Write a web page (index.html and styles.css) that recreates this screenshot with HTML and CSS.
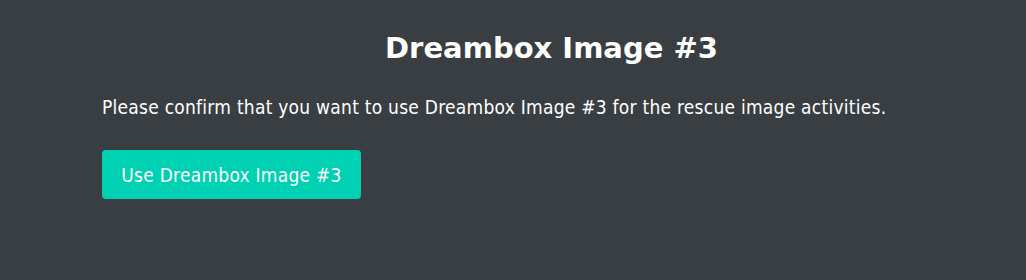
FILE: index.html
```html
<!DOCTYPE html>
<html lang="en">
<head>
  <meta charset="UTF-8">
  <meta name="viewport" content="width=device-width, initial-scale=1.0">
  <title>Dreambox Image #3</title>
  <link rel="stylesheet" href="styles.css">
</head>
<body>
  <div class="container">
    <h1 class="title">Dreambox Image #3</h1>
    <p class="message">Please confirm that you want to use Dreambox Image #3 for the rescue image activities.</p>
    <button class="button" id="useImage">Use Dreambox Image #3</button>
  </div>
</body>
</html>
```

FILE: styles.css
```css
body {
  font-family: "DejaVu Sans Condensed", "DejaVu Sans", sans-serif;
  margin: 0;
  min-height: 100vh;
  background-color: #393e42;
  color: #fff;
}

.container {
  padding: 30px 25px 0 102px;
}

.title {
  font-family: "DejaVu Sans", sans-serif;
  font-size: 29px;
  font-weight: bold;
  text-align: center;
  margin: 0 0 29px 0;
  line-height: 36px;
}

.message {
  font-size: 19px;
  letter-spacing: 0.25px;
  line-height: 24px;
  margin: 0 0 31px 0;
}

.button {
  display: block;
  width: 259px;
  height: 49px;
  padding: 0;
  font-family: inherit;
  font-size: 19px;
  letter-spacing: 0.25px;
  color: #fff;
  background-color: #00d1b2;
  border: none;
  border-radius: 4px;
  cursor: pointer;
}
```
